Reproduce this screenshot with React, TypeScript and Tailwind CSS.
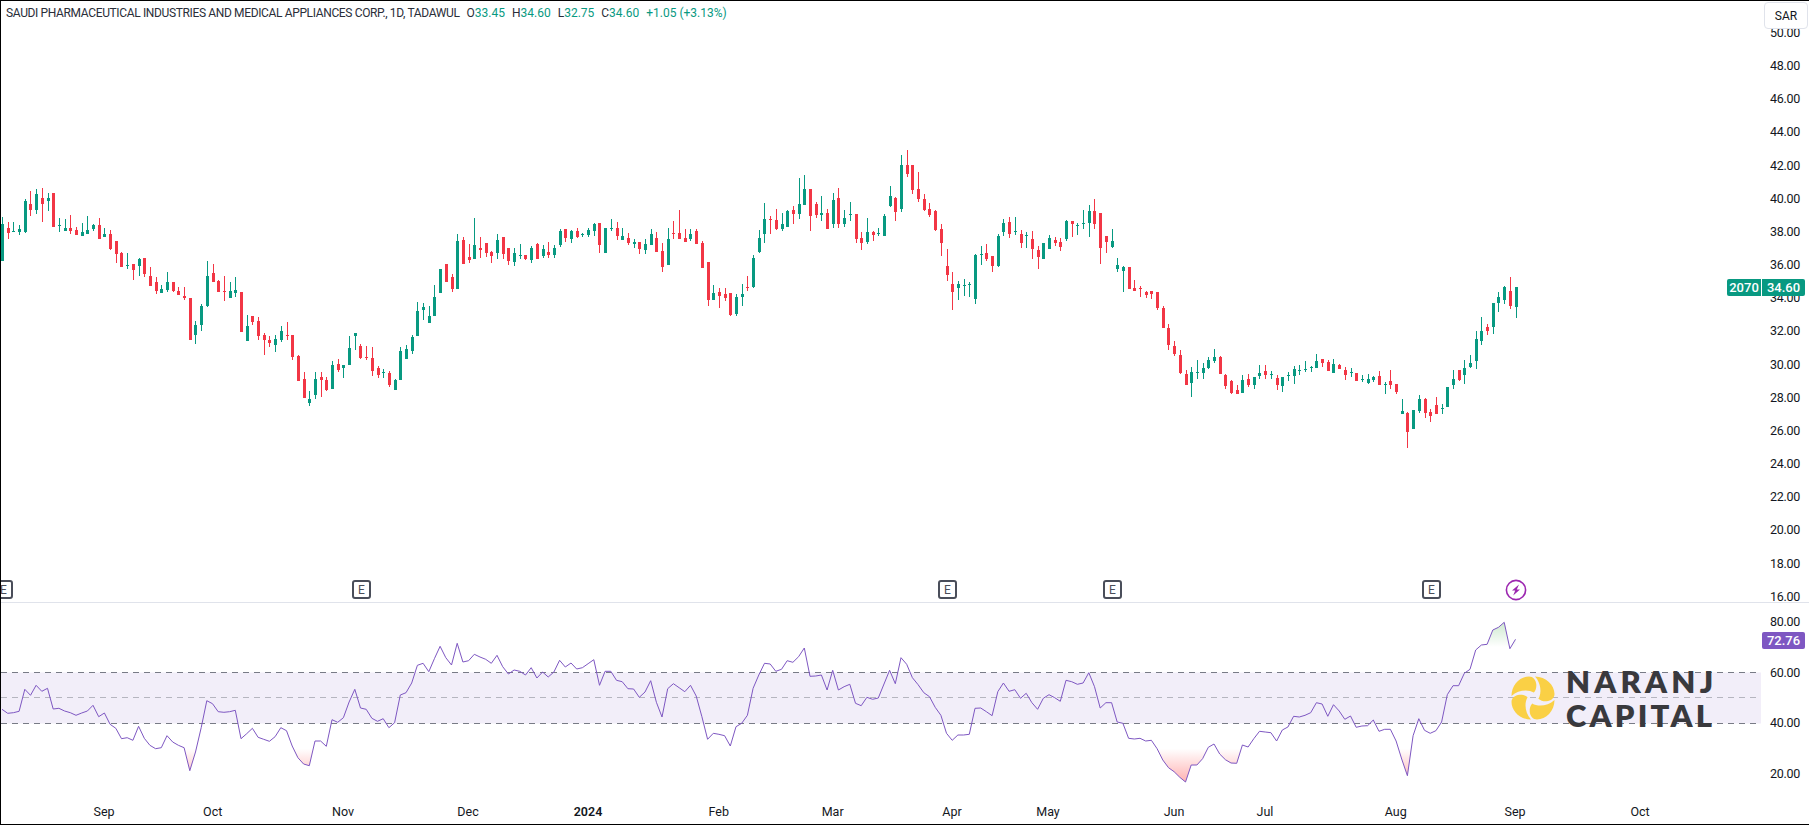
const GREEN = "#089981";
const RED = "#f23645";
const STEP = 5.69;
const barX = (i: number) => 2 + STEP * i;

// [up, high, bodyTop, bodyBottom, low] read off the chart, in 3x pixels
type Row = [number, number, number, number, number];

const firstRows: Row[] = [
  [1,81,102,213,213],[0,96,114,129,147],[1,96,123,125,126],[1,105,117,126,135],[1,27,33,125,129],
  [0,3,42,60,78],[1,-3,12,60,72],[0,-6,24,42,96],[1,9,24,33,63],[0,9,9,111,111],
  [1,84,105,107,126],[1,87,114,123,123],[0,75,114,123,132],[0,111,120,135,135],[1,99,126,138,138],
  [1,78,120,132,132],[1,102,105,117,123],[0,84,105,147,147],[1,114,132,141,141],[0,120,132,177,180],
  [0,153,153,192,219],[0,186,189,231,231],[1,189,225,228,237],[0,222,222,240,270],[1,204,207,228,258],
  [0,204,204,252,261],[0,231,258,288,288],[0,261,276,303,312],[1,285,297,309,309],[1,246,276,300,306],
  [0,276,276,303,306],[0,291,303,315,315],[0,291,318,324,330],[0,324,324,450,450],[1,393,405,435,462],
  [1,342,348,405,423],[1,213,258,348,351],[0,222,249,276,276],[0,270,273,306,306],[0,258,303,305,333],
  [1,276,303,324,324],[1,261,300,309,321],[0,306,306,426,426],[1,375,408,453,453],[0,378,378,396,405],
  [0,381,393,438,450],[0,429,435,450,495],[0,438,450,459,471],[1,435,447,465,486],[1,408,423,450,456],
  [0,396,435,437,450],[0,435,435,501,510],[0,495,498,573,573],[0,546,567,624,624],[1,603,627,639,648],
  [1,546,567,615,627],[0,546,561,570,621],[0,561,570,600,603],[1,513,525,597,597],[0,507,522,540,546],
  [1,525,525,534,564],[1,438,474,525,525],[1,429,429,438,480],[0,462,468,504,507],[0,468,501,503,510],
  [0,471,504,543,558],[0,528,534,555,564],[1,537,546,548,564],[0,543,549,585,591],[1,567,570,600,600],
  [1,471,483,570,570],[1,465,477,507,507],[1,435,441,483,492],[1,336,363,438,438],[1,339,351,360,390],
  [1,348,378,399,399],[1,285,321,378,378],[1,237,237,309,309],[0,222,222,276,276],[0,252,261,297,306],
  [1,132,153,297,297],[0,141,150,222,222],[0,162,201,210,219],[1,84,165,207,207],[0,141,174,180,204],
  [0,159,159,189,201],[0,183,186,198,219],[1,132,150,189,207],[0,141,141,192,207],[0,174,174,213,225],
  [1,174,189,216,228],[1,162,195,198,207],[0,195,195,207,210],[1,168,174,210,219],[0,159,162,207,207],
  [1,165,177,198,204],[0,156,186,195,204],[1,165,174,195,204],[1,117,123,165,171],[0,117,117,144,156],
  [1,120,123,147,159],[0,114,123,141,144],[1,129,132,134,141],[1,114,120,135,141],[1,99,102,123,138],
  [0,99,99,165,189],
];

const midRows: Row[] = [
  [1,264,264,339,339],[1,237,264,267,273],[0,246,264,288,300],[1,264,288,300,300],[0,279,294,309,315],
  [1,297,306,312,324],[0,306,306,327,342],[1,297,312,330,342],[1,267,282,315,315],[0,276,294,336,336],
  [0,309,333,381,396],[1,264,297,375,375],[0,243,279,282,297],[0,210,279,297,297],[0,267,294,306,306],
  [1,267,282,297,303],[0,267,273,312,312],[0,303,309,384,384],[0,366,366,480,498],[1,435,459,480,480],
  [0,444,456,468,504],[0,444,462,474,483],[0,459,459,525,528],[1,462,471,522,528],[1,432,462,471,498],
  [0,408,441,443,453],[1,345,354,441,444],[1,270,294,336,339],[1,189,237,282,309],[0,228,237,240,282],
  [0,207,240,267,270],[1,219,252,267,273],[1,210,213,261,261],[0,198,210,222,252],[1,114,192,222,237],
  [1,105,147,195,195],[0,147,147,228,273],[0,186,192,225,234],[1,168,219,225,243],[0,207,219,267,267],
  [1,159,180,252,264],[0,144,174,252,264],[1,210,234,252,261],[1,186,222,224,243],[0,222,222,297,309],
  [0,276,294,309,330],[1,234,276,306,312],[0,273,276,285,303],[1,264,279,281,288],[1,222,228,288,288],
  [1,138,168,198,201],[0,171,174,216,243],[1,45,75,207,216],[0,30,75,102,111],[0,75,75,150,162],
  [0,96,147,177,186],[0,162,177,210,213],[0,189,207,225,231],[0,210,213,270,273],[0,252,267,309,348],
  [0,327,378,405,423],[0,396,432,456,510],[1,423,432,444,480],[1,417,435,437,468],[1,426,432,434,471],
  [1,342,345,477,492],[1,318,342,344,375],[0,312,339,357,363],[0,348,348,378,396],[1,282,288,378,381],
  [1,237,249,276,288],[0,231,246,282,294],[1,231,273,275,285],[0,270,282,309,324],[1,276,285,287,324],
  [0,273,297,327,357],[0,318,330,351,387],[1,309,309,357,357],[1,285,294,327,327],[0,291,300,309,318],
  [0,294,306,321,333],[1,240,243,297,303],[0,243,243,252,291],[1,249,255,258,285],[1,210,249,252,267],
  [1,195,213,249,291],[0,177,213,252,267],
];

const lastRows: Row[] = [
  [0,-21,-21,84,132],[0,48,48,66,99],[1,27,63,81,84],
  [1,114,135,147,156],[1,138,141,153,216],[0,141,141,207,207],[0,180,204,213,213],[0,198,204,206,231],
  [0,213,216,225,234],[0,213,213,222,237],[0,216,216,264,270],[0,258,264,324,324],[0,312,324,375,390],
  [0,363,378,402,408],[0,390,405,459,462],[0,450,462,495,495],[1,441,456,489,531],[1,420,456,458,477],
  [1,429,444,459,477],[1,411,420,444,447],[1,387,411,423,429],[0,408,411,462,462],[0,462,465,498,507],
  [0,480,483,519,522],[0,495,510,522,522],[1,465,480,519,519],[0,462,477,495,501],[1,471,471,495,507],
  [1,435,459,468,477],[0,435,453,465,477],[1,453,462,464,477],[0,465,474,495,510],[1,471,471,498,516],
  [1,456,465,467,483],[1,438,447,468,492],[1,435,450,453,465],[1,423,447,450,456],[1,438,441,443,456],
  [1,402,423,444,444],[0,417,417,429,441],[0,420,426,453,453],[1,417,432,459,459],[0,432,435,447,447],
  [0,441,450,465,480],[1,444,456,458,471],[0,459,459,483,483],[1,465,477,480,486],[1,462,477,489,492],
  [1,468,471,480,486],[0,453,468,495,495],[1,486,492,494,522],[0,450,483,495,507],[0,492,492,516,522],
  [1,537,573,582,582],[0,576,579,636,684],[1,570,570,627,627],[1,525,537,573,579],[0,534,537,579,594],
  [0,567,576,588,606],[0,531,555,582,582],[1,552,564,566,582],[1,501,501,561,561],[1,450,477,495,507],
  [0,450,450,480,483],[1,420,444,465,492],[1,405,429,441,444],[1,333,357,423,447],[1,291,333,363,375],
  [0,312,321,333,345],[1,249,249,321,342],[1,216,231,249,276],[1,198,201,240,252],[0,171,213,258,267],
  [1,201,201,261,294],
];

const shift = (rows: Row[], top: number): Row[] =>
  rows.map(([u, h, t, b, l]) => [u, top + h / 3, top + t / 3, top + b / 3, top + l / 3]);

const candles: Row[] = [...shift(firstRows, 190), ...shift(midRows, 140), ...shift(lastRows, 220)];

const rsiRaw = [
  418,430,428,424,358,376,346,364,355,417,415,423,428,436,429,423,406,440,429,463,
  475,506,503,511,469,505,526,536,533,497,516,526,533,602,546,473,392,401,425,427,
  425,421,506,491,475,502,508,514,500,473,482,528,563,582,587,513,513,529,449,457,
  443,396,358,414,418,445,454,446,473,458,375,368,339,286,280,305,266,229,263,285,
  220,276,272,253,261,268,280,256,290,312,300,304,315,293,324,306,321,306,271,291,
  279,297,293,281,269,346,304,304,331,335,356,357,382,366,332,397,441,356,341,353,
  365,346,378,440,508,490,493,497,528,470,460,436,355,315,280,282,304,298,272,277,
  260,234,319,318,315,360,301,360,350,343,400,407,382,388,384,342,301,341,263,283,
  323,344,368,380,412,436,490,511,495,495,493,415,414,425,437,365,339,364,359,385,
  370,398,418,385,374,383,394,331,335,343,339,308,350,414,398,398,456,460,505,507,
  505,513,511,536,570,593,605,622,636,585,585,566,532,522,552,569,579,580,525,531,
  506,484,486,488,513,480,471,439,441,436,428,398,402,439,404,423,448,438,472,468,
  467,450,484,478,478,513,567,617,497,446,481,490,482,456,374,347,347,310,298,240,
  225,223,180,172,157,236,208,
];
const rsiPts = rsiRaw.map((y, i) => [barX(i), 570 + y / 3]);
const rsiLine = rsiPts.map(([x, y]) => `${x.toFixed(1)},${y.toFixed(1)}`).join(" ");
const Y70 = 647;
const Y30 = 748.7;
const lastX = barX(rsiPts.length - 1);
const topArea = `2,${Y70} ${rsiLine} ${lastX},${Y70}`;
const bottomArea = `2,${Y30} ${rsiLine} ${lastX},${Y30}`;

const priceLabels = ["50.00","48.00","46.00","44.00","42.00","40.00","38.00","36.00","34.00","32.00","30.00","28.00","26.00","24.00","22.00","20.00","18.00","16.00"];
const rsiLabels = ["80.00", "60.00", "40.00", "20.00"];
const earnings = [-7, 351, 937, 1102, 1421];
const months = [
  { label: "Sep", x: 104 }, { label: "Oct", x: 212.7 }, { label: "Nov", x: 343 }, { label: "Dec", x: 468 },
  { label: "2024", x: 588, bold: true }, { label: "Feb", x: 718.7 }, { label: "Mar", x: 832.7 }, { label: "Apr", x: 952 },
  { label: "May", x: 1048 }, { label: "Jun", x: 1174 }, { label: "Jul", x: 1265 }, { label: "Aug", x: 1395.7 },
  { label: "Sep", x: 1515 }, { label: "Oct", x: 1640 },
];

function Candles() {
  return (
    <svg className="block w-[1760px] h-[601px]" viewBox="1 1 1760 601" shapeRendering="crispEdges">
      {candles.map(([up, hi, top, bot, lo], i) => {
        const x = Math.round(barX(i));
        const t = Math.round(top);
        const color = up ? GREEN : RED;
        return (
          <g key={i} fill={color}>
            <rect x={x} y={Math.round(hi)} width={1} height={Math.max(1, Math.round(lo) - Math.round(hi))} />
            <rect x={x - 1} y={t} width={3} height={Math.max(1, Math.round(bot) - t)} />
          </g>
        );
      })}
    </svg>
  );
}

function RsiChart() {
  return (
    <svg className="block w-[1760px] h-[192px]" viewBox="1 603 1760 192">
      <defs>
        <linearGradient id="ob" gradientUnits="userSpaceOnUse" x1="0" y1={Y70} x2="0" y2="622">
          <stop offset="0" stopColor="#4caf50" stopOpacity="0" />
          <stop offset="1" stopColor="#4caf50" stopOpacity="0.28" />
        </linearGradient>
        <linearGradient id="os" gradientUnits="userSpaceOnUse" x1="0" y1={Y30} x2="0" y2="782">
          <stop offset="0" stopColor="#ff5252" stopOpacity="0" />
          <stop offset="1" stopColor="#ff5252" stopOpacity="0.45" />
        </linearGradient>
        <clipPath id="above"><rect x="0" y="603" width="1761" height={Y70 - 603} /></clipPath>
        <clipPath id="below"><rect x="0" y={Y30} width="1761" height="60" /></clipPath>
      </defs>
      <rect x="1" y="672.5" width="1760" height="51" fill="#7e57c2" fillOpacity="0.1" />
      <line x1="1" x2="1761" y1="672.5" y2="672.5" stroke="#787b86" strokeDasharray="6 5" />
      <line x1="1" x2="1761" y1="697.5" y2="697.5" stroke="#787b86" strokeOpacity="0.5" strokeDasharray="6 5" />
      <line x1="1" x2="1761" y1="723.5" y2="723.5" stroke="#787b86" strokeDasharray="6 5" />
      <polygon points={topArea} fill="url(#ob)" clipPath="url(#above)" />
      <polygon points={bottomArea} fill="url(#os)" clipPath="url(#below)" />
      <polyline points={rsiLine} fill="none" stroke="#7e57c2" strokeWidth="1" strokeLinejoin="round" />
    </svg>
  );
}

function Logo() {
  const petal = "M0.5 20 C0.5 9 9 0.5 18 0.5 C22 0.5 25 4 25.3 8.5 C25.5 11.5 24.7 14.5 22.8 16.6 C17 13 7 14 0.5 20 Z";
  return (
    <div className="absolute left-[1510px] top-[663px] flex items-center gap-[11px]">
      <svg className="w-[44px] h-[44px] shrink-0" viewBox="0 0 44 44">
        {[0, 90, 180, 270].map((r) => (
          <path key={r} d={petal} fill="#fad045" transform={`rotate(${r} 22 22)`} />
        ))}
      </svg>
      <div className="font-['Lato',sans-serif] font-extrabold text-[#39393d] text-[31px] leading-[34px]">
        <div className="tracking-[4.2px]">NARANJ</div>
        <div className="tracking-[3.2px]">CAPITAL</div>
      </div>
    </div>
  );
}

export default function App() {
  return (
    <div className="relative w-[1809px] h-[825px] overflow-hidden bg-white border-t border-l border-b border-black text-[#131722] font-['Roboto',sans-serif]">
      <div className="relative flex h-[601px]">
        <Candles />
        <div className="flex flex-col pl-[9px] pt-[23px] text-[12.5px] tracking-[-0.3px] leading-[18px]">
          {priceLabels.map((p) => (
            <div key={p} className="h-[18px] mb-[15.16px]">{p}</div>
          ))}
        </div>
        <div className="absolute left-[5px] top-[3px] flex gap-[7px] text-[12px] leading-[18px] text-[#2a2e39]">
          <span className="tracking-[-0.36px]">SAUDI PHARMACEUTICAL INDUSTRIES AND MEDICAL APPLIANCES CORP., 1D, TADAWUL</span>
          <span className="flex gap-[7px]">
            <span>O<span className="text-[#089981]">33.45</span></span>
            <span>H<span className="text-[#089981]">34.60</span></span>
            <span>L<span className="text-[#089981]">32.75</span></span>
            <span>C<span className="text-[#089981]">34.60</span></span>
            <span className="text-[#089981]">+1.05 (+3.13%)</span>
          </span>
        </div>
        <div className="absolute left-[1763px] top-[1px] w-[44px] h-[27px] flex items-center justify-center rounded-[4px] border border-[#e0e3eb] bg-white text-[12px]">SAR</div>
        <div className="absolute left-[1726px] top-[278px] flex gap-px text-[13px] font-medium leading-[17px] text-white">
          <div className="w-[34px] text-center rounded-l-[2px] bg-[#089981]">2070</div>
          <div className="w-[43px] text-center rounded-r-[2px] bg-[#089981]">34.60</div>
        </div>
        {earnings.map((x) => (
          <div key={x} style={{ left: x }} className="absolute top-[579px] w-[19px] h-[19px] flex items-center justify-center rounded-[3px] border-2 border-[#4a4e5a] bg-white text-[12px] leading-none text-[#4a4e5a]">E</div>
        ))}
        <svg className="absolute left-[1504px] top-[578px] w-[22px] h-[22px]" viewBox="0 0 22 22">
          <circle cx="11" cy="11" r="9.6" fill="#fff" stroke="#9c27b0" strokeWidth="1.6" />
          <path d="M14 5.5 L7 11.5 L10.2 11.5 L8.2 16.5 L15 10.5 L11.8 10.5 Z" fill="#9c27b0" />
        </svg>
      </div>
      <div className="h-px bg-[#e0e3eb]" />
      <div className="flex h-[192px]">
        <RsiChart />
        <div className="flex flex-col pl-[9px] pt-[10px] text-[12.5px] tracking-[-0.3px] leading-[18px]">
          {rsiLabels.map((p) => (
            <div key={p} className="h-[18px] mb-[32.7px]">{p}</div>
          ))}
        </div>
      </div>
      <div className="absolute left-[1761px] top-[631px] w-[43px] h-[17px] flex items-center justify-center rounded-[2px] bg-[#7e57c2] text-white text-[13px] font-medium leading-none">72.76</div>
      <Logo />
      <div className="relative h-[29px] text-[12.5px] leading-[18px]">
        {months.map((m) => (
          <span key={m.x} style={{ left: m.x - 1 }} className={`absolute top-[8px] -translate-x-1/2 ${m.bold ? "font-semibold" : ""}`}>{m.label}</span>
        ))}
      </div>
    </div>
  );
}
